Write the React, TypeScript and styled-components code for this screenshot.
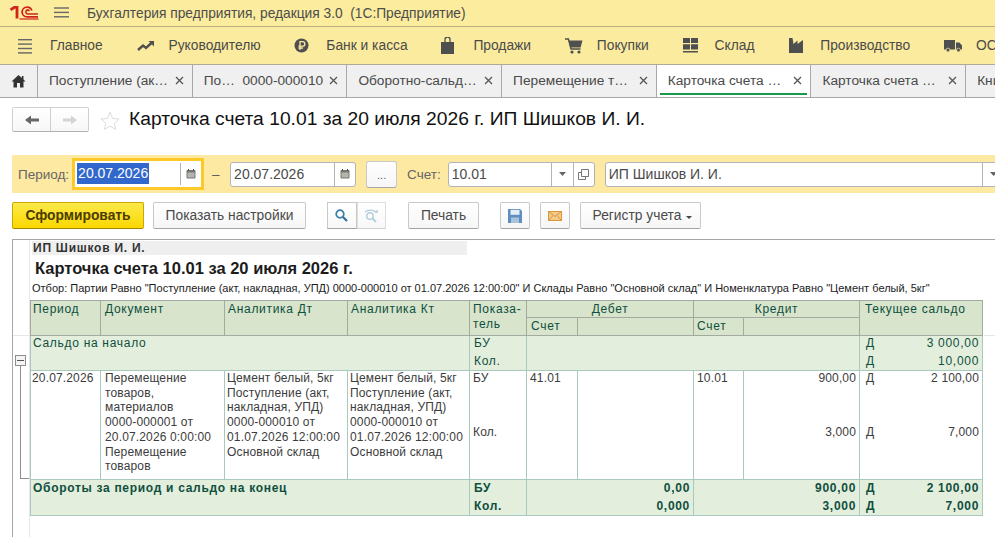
import React from "react";
import styled, { createGlobalStyle } from "styled-components";

const Global = createGlobalStyle`
  html, body { margin: 0; padding: 0; background: #fff; overflow: hidden; }
  body { font-family: "Liberation Sans", Arial, sans-serif; }
  * { box-sizing: border-box; }
`;

const Page = styled.div`
  width: 995px; height: 537px; overflow: hidden; display: flex; flex-direction: column;
`;
const TitleBar = styled.header`
  height: 27px; flex: none; background: #fbec9e; border-bottom: 1px solid #b9ae84;
  display: flex; align-items: center; padding-left: 10px; color: #4d4d4d; font-size: 13.75px;
`;
const TitleText = styled.span` margin-left: 18px; white-space: pre; `;
const LogoGap = styled.span` width: 15px; flex: none; `;
const MenuBar = styled.nav`
  height: 38px; flex: none; background: #fbeb9f; border-bottom: 1px solid #aeaa96;
  display: flex; align-items: center; padding-left: 18px; gap: 33.8px; white-space: nowrap; overflow: hidden;
`;
const MenuItem = styled.div`
  display: flex; align-items: center; gap: 0; font-size: 13.8px; color: #4a4a4a;
`;
const MenuIcon = styled.span`
  width: 32px; flex: none; display: flex; align-items: center;
  svg { display: block; }
`;
const TabBar = styled.div`
  height: 33px; flex: none; background: #f0f0f0; border-bottom: 1px solid #a8a8a8;
  display: flex; overflow: hidden;
`;
const HomeTab = styled.div`
  width: 38px; flex: none; border-right: 1px solid #a8a8a8; display: flex; align-items: center; justify-content: center;
`;
const Tab = styled.div<{ $active?: boolean }>`
  position: relative; width: 154.7px; flex: none; border-right: 1px solid #a8a8a8;
  background: ${p => (p.$active ? "#fff" : "transparent")};
  display: flex; align-items: center; padding: 0 8px 2px 11px; font-size: 13.7px; color: #4a4a4a; white-space: pre;
  ${p => p.$active && `&::after { content: ""; position: absolute; left: 3px; right: 3px; bottom: 2px; height: 2px; background: #169a4c; }`}
`;
const TabLabel = styled.span` flex: 1; overflow: hidden; `;
const NavRow = styled.div`
  height: 57px; flex: none; padding: 9px 0 0 12px; display: flex; align-items: flex-start;
`;
const NavGroup = styled.div`
  width: 77px; height: 25px; display: flex; border: 1px solid #cfcfcf; border-radius: 2px; border-bottom-color: #b0b0b0;
  background: linear-gradient(#fff, #f7f7f7);
`;
const NavButton = styled.div`
  flex: 1; display: flex; align-items: center; justify-content: center;
  & + & { border-left: 1px solid #cfcfcf; }
`;
const StarWrap = styled.span` margin: 4px 0 0 11px; width: 29px; `;
const PageTitle = styled.h1`
  margin: 0; font-weight: 400; font-size: 19.25px; color: #111; line-height: 24px; white-space: nowrap;
`;
const FilterBand = styled.div`
  height: 38px; flex: none; margin-left: 12px; background: #fde9a2; display: flex; align-items: center;
  padding-left: 6px; white-space: nowrap; font-size: 13.5px; color: #666; overflow: hidden;
`;
const FocusRing = styled.div`
  width: 132px; height: 32px; flex: none; border: 3px solid #fcc928; background: #fff; margin-left: 3px;
  display: flex; padding: 2px 0 2px 2px; align-items: stretch;
`;
const FieldBox = styled.div<{ $w: number; $ml: number }>`
  width: ${p => p.$w}px; margin-left: ${p => p.$ml}px; height: 25px; flex: none; background: #fff;
  border: 1px solid #b3b3b3; border-radius: 3px; display: flex; align-items: stretch;
  font-size: 14px; color: #4a4a4a; overflow: hidden;
`;
const FieldText = styled.span` flex: 1; padding-left: 3px; line-height: 23px; `;
const Selected = styled.span`
  flex: 1; font-size: 14px; line-height: 21px;
  & > span { background: #3268cc; color: #fff; display: inline-block; padding: 0 1px 0 1px; }
`;
const FieldBtn = styled.span<{ $w: number }>`
  width: ${p => p.$w}px; flex: none; border-left: 1px solid #b3b3b3; display: flex; align-items: center; justify-content: center;
`;
const Dash = styled.span` margin-left: 8px; flex: none; width: 8px; color: #555; `;
const FieldLabel = styled.span<{ $ml: number }>` margin-left: ${p => p.$ml}px; flex: none; `;
const DotsBtn = styled.div`
  width: 31px; height: 27px; flex: none; margin-left: 10px; background: linear-gradient(#fff, #f6f6f6); border: 1px solid #c9c9c9;
  border-bottom-color: #a8a8a8; border-radius: 3px; text-align: center; font-size: 11px; line-height: 27px; color: #666;
`;
const ActionBar = styled.div`
  height: 46px; flex: none; padding: 9px 0 0 12px; display: flex; align-items: flex-start;
`;
const Btn = styled.div<{ $w: number; $ml?: number; $primary?: boolean }>`
  width: ${p => p.$w}px; margin-left: ${p => p.$ml ?? 0}px; height: 27px; flex: none; border-radius: 2px;
  display: flex; align-items: center; justify-content: center; font-size: 13.8px; white-space: nowrap;
  color: ${p => (p.$primary ? "#4a3c00" : "#4a4a4a")}; font-weight: ${p => (p.$primary ? 700 : 400)};
  border: 1px solid ${p => (p.$primary ? "#c9a900" : "#c9c9c9")};
  border-bottom-color: ${p => (p.$primary ? "#a08800" : "#a3a3a3")};
  background: ${p => (p.$primary ? "linear-gradient(#fce94a, #fbd800)" : "linear-gradient(#fff, #f6f6f6)")};
`;
const DropBtn = styled(Btn)` padding-left: 4px; `;
const SearchGroup = styled.div`
  width: 59px; margin-left: 21px; height: 27px; flex: none; display: flex;
`;
const SearchBtn = styled.div<{ $off?: boolean }>`
  flex: 1; display: flex; align-items: center; justify-content: center; background: linear-gradient(#fff, #f8f8f8);
  border: 1px solid ${p => (p.$off ? "#dedede" : "#c9c9c9")};
  border-bottom-color: ${p => (p.$off ? "#d0d0d0" : "#a3a3a3")};
`;
const Caret = styled.span`
  width: 0; height: 0; border: 3px solid transparent; border-top: 3px solid #444; border-bottom: 0; margin: 3px 0 0 5px;
`;
const Report = styled.section`
  position: relative; flex: 1; margin-left: 12px; border-left: 1px solid #a6a6a6; border-top: 1px solid #a6a6a6;
  display: flex; min-height: 0;
  &::after { content: ""; position: absolute; left: 971px; right: 0; top: 95px; height: 1px; background: #e6e6e6; }
`;
const Gutter = styled.div`
  width: 17px; flex: none; border-right: 1px solid #e6e6e6; display: flex; flex-direction: column;
`;
const GutterHead = styled.div` height: 96px; flex: none; border-bottom: 1px solid #e6e6e6; `;
const GroupBox = styled.div`
  width: 11px; height: 11px; margin: 19px 0 0 2px; flex: none; border: 1px solid #8e8e8e; background: #f4f4f4;
  display: flex; align-items: center; justify-content: center;
  &::before { content: ""; width: 7px; height: 1px; background: #555; }
`;
const GroupLine = styled.div`
  width: 9px; height: 113px; margin-left: 7px; flex: none; border-left: 1px solid #8e8e8e; border-bottom: 1px solid #8e8e8e;
`;
const Sheet = styled.div` flex: 1; min-width: 0; `;
const OrgLine = styled.div`
  width: 435px; height: 14px; margin: 1px 0 0 2px; background: #efefef; font-size: 12px; font-weight: 700; line-height: 14px;
  color: #333; padding-left: 1px; letter-spacing: .75px;
`;
const SheetTitle = styled.div`
  margin: 3px 0 0 5px; height: 20px; font-size: 16.5px; font-weight: 700; color: #1c1c1c; line-height: 20px; white-space: nowrap;
`;
const FilterLine = styled.div`
  margin: 3px 0 0 2px; height: 19px; font-size: 11px; line-height: 14px; color: #1c1c1c; white-space: nowrap;
`;
const Table = styled.table`
  width: 952px; table-layout: fixed; border-collapse: collapse; font-size: 12px; line-height: 14.7px;
  letter-spacing: .15px; color: #3c3c3c;
`;
const Th = styled.th<{ $center?: boolean; $pl?: number }>`
  background: #d8e4cc; border: 1px solid #a3aaa0; padding: 1px 3px 0 ${p => p.$pl ?? 3}px; font-weight: 400; color: #0f4f40; vertical-align: top;
  text-align: ${p => (p.$center ? "center" : "left")}; overflow: hidden; white-space: nowrap; letter-spacing: .7px;
`;
const HeadRow = styled.tr<{ $h: number }>` height: ${p => p.$h}px; `;
const Row = styled.tr<{ $h: number }>` height: ${p => p.$h}px; `;
const Td = styled.td<{ $right?: boolean; $bold?: boolean; $band?: boolean; $flat?: "top" | "bottom"; $pl?: number }>`
  border: 1px solid #a9c9bf; padding: ${p => (p.$bold ? 1 : 0)}px 3px 0 ${p => p.$pl ?? 3}px; vertical-align: top; white-space: nowrap; overflow: hidden;
  line-height: 14.7px;
  text-align: ${p => (p.$right ? "right" : "left")};
  font-weight: ${p => (p.$bold ? 700 : 400)};
  ${p => p.$band && "background: #e3eedc; color: #0f4f40; letter-spacing: .7px;"}
  ${p => p.$flat === "top" && "border-bottom: 0;"}
  ${p => p.$flat === "bottom" && "border-top: 0;"}
`;
const Saldo = styled.div` display: flex; justify-content: space-between; padding-left: 3px; `;
const Lines = styled.div` white-space: pre-line; `;

const Ic = ({ w = 16, h = 16, children }: { w?: number; h?: number; children: React.ReactNode }) => (
  <svg width={w} height={h} viewBox={`0 0 ${w} ${h}`}>{children}</svg>
);
const Logo = () => (
  <svg width="29" height="14" viewBox="0 0 29 14" fill="none">
    <path d="M0.5 3.8 L5 1 H7 V12.5" stroke="#d0231c" strokeWidth="2.8" />
    <path d="M28 10.9 H17 A4.9 4.9 0 0 1 17 1.1 A4.9 4.9 0 0 1 21.8 4.5" stroke="#d0231c" strokeWidth="1.8" />
    <path d="M28 8 H17.5 A2.1 2.1 0 0 1 17.5 3.9 A2.1 2.1 0 0 1 19.3 5.2" stroke="#d0231c" strokeWidth="1.6" />
    <path d="M9.5 13 H28.5" stroke="#d0231c" strokeWidth="1.2" />
  </svg>
);
const c = "#4f4f4f";
const Burger = ({ n = 3 }: { n?: number }) => (
  <Ic w={15} h={16}>
    {Array.from({ length: n }, (_, i) => (
      <rect key={i} x="0" y={n === 3 ? 2.3 + i * 4.4 : 1 + i * 4.4} width={n === 3 ? 15 : 14} height="1.4" fill="#666" />
    ))}
  </Ic>
);
const Chart = () => (
  <Ic w={18} h={12}>
    <path d="M1 10 L6 5.5 L9 8 L15 2.5" stroke={c} strokeWidth="2.4" fill="none" />
    <path d="M11.5 1 H17 V6.5 Z" fill={c} />
  </Ic>
);
const Coin = () => (
  <Ic w={15} h={15}>
    <circle cx="7.5" cy="7.5" r="7" fill={c} />
    <path d="M6 12 V3.7 H8.6 A2.2 2.2 0 0 1 8.6 8.2 H4.5 M4.5 10 H9" stroke="#fbe9a0" strokeWidth="1.3" fill="none" />
  </Ic>
);
const Bag = () => (
  <Ic w={13} h={17}>
    <path d="M0 5 H13 V17 H0 Z" fill={c} />
    <path d="M4 7 V2.5 A2.5 2.5 0 0 1 9 2.5 V7" stroke={c} strokeWidth="1.3" fill="none" />
  </Ic>
);
const Cart = () => (
  <Ic w={18} h={16}>
    <path d="M0 1 H3.4 L6 11 H15.5" stroke={c} strokeWidth="1.4" fill="none" />
    <path d="M3.6 2.4 H17.5 L15.6 9.5 H5.3 Z" fill={c} />
    <circle cx="7" cy="14" r="1.6" fill={c} /><circle cx="14" cy="14" r="1.6" fill={c} />
  </Ic>
);
const Store = () => (
  <Ic w={15} h={15}>
    <path d="M0 0 H7 V5 H0Z M8 0 H15 V5 H8Z M0 6.3 H7 V11.5 H0Z M8 6.3 H15 V11.5 H8Z M0 13 H15 V14.6 H0Z" fill={c} />
  </Ic>
);
const Factory = () => (
  <Ic w={15} h={15}>
    <path d="M1 15 V0 H4.5 L5.5 6 L9.5 2.5 V6 L15 2 V15 Z" fill={c} />
  </Ic>
);
const Truck = () => (
  <Ic w={18} h={13}>
    <path d="M0 1 H11 V10.5 H0Z M12 3.5 H15.5 L18 6.5 V10.5 H12Z" fill={c} />
    <circle cx="4" cy="11" r="1.9" fill={c} stroke="#fbe9a0" strokeWidth=".7" />
    <circle cx="14.5" cy="11" r="1.9" fill={c} stroke="#fbe9a0" strokeWidth=".7" />
  </Ic>
);
const Home = () => (
  <Ic w={15} h={14}>
    <path d="M7.5 1 L0.5 7.5 H2.5 V13.5 H6 V9 H9 V13.5 H12.5 V7.5 H14.5 L12.5 5.6 V2 H10.8 V4 Z" fill="#333" />
  </Ic>
);
const Close = () => (
  <Ic w={9} h={9}>
    <path d="M1 1 L8 8 M8 1 L1 8" stroke="#555" strokeWidth="1.3" />
  </Ic>
);
const Arrow = ({ dir, color }: { dir: "l" | "r"; color: string }) => (
  <Ic w={14} h={10}>
    <path d={dir === "l" ? "M0 5 L6 0.5 V3.5 H14 V6.5 H6 V9.5 Z" : "M14 5 L8 0.5 V3.5 H0 V6.5 H8 V9.5 Z"} fill={color} />
  </Ic>
);
const Star = () => (
  <Ic w={20} h={19}>
    <path d="M10 1.2 L12.6 7.4 L19 8 L14.2 12.3 L15.7 18.4 L10 15.2 L4.3 18.4 L5.8 12.3 L1 8 L7.4 7.4 Z" fill="none" stroke="#dcdcdc" />
  </Ic>
);
const Calendar = () => (
  <Ic w={10} h={10}>
    <rect x="0.5" y="1" width="9" height="8.5" rx="1" fill="#77766f" />
    <rect x="1.5" y="3.5" width="7" height="5" fill="#b5b4ad" />
    <path d="M2.5 0 V2 M7.5 0 V2" stroke="#555" />
  </Ic>
);
const Drop = () => (
  <svg width="7" height="4" viewBox="0 0 7 4"><path d="M0 0 H7 L3.5 4 Z" fill="#666" /></svg>
);
const Copy = () => (
  <Ic w={11} h={11}>
    <path d="M3.5 .5 H10.5 V7.5 H3.5 Z M3.5 3.5 H.5 V10.5 H7.5 V7.5" fill="none" stroke="#777" />
  </Ic>
);
const Search = ({ off }: { off?: boolean }) => off ? (
  <Ic w={16} h={15}>
    <circle cx="7" cy="8" r="3.3" fill="none" stroke="#b4d0dc" strokeWidth="1.5" />
    <path d="M9.5 10.5 L13 14" stroke="#b4d0dc" strokeWidth="2" />
    <path d="M2 4 A7 5 0 0 1 13 4" fill="none" stroke="#b4d0dc" strokeWidth="1.3" />
    <path d="M11 4.5 L15 5 L14.5 1.5 Z" fill="#b4d0dc" />
  </Ic>
) : (
  <Ic w={13} h={13}>
    <circle cx="5" cy="5" r="3.8" fill="none" stroke="#3b7fa8" strokeWidth="1.7" />
    <path d="M8 8 L12 12" stroke="#2f6e96" strokeWidth="2.2" />
  </Ic>
);
const Disk = () => (
  <Ic w={14} h={14}>
    <path d="M0 0 H12 L14 2 V14 H0 Z" fill="#5e8dc0" />
    <rect x="2.5" y="0.8" width="9" height="5" fill="#e4edf5" />
    <rect x="3" y="8.5" width="8" height="5.5" fill="#a9c3dc" />
  </Ic>
);
const Mail = () => (
  <Ic w={14} h={10}>
    <rect x="0.5" y="0.5" width="13" height="9" fill="#f5c98a" stroke="#d9963a" />
    <path d="M.5 .5 L7 5.5 L13.5 .5 M.5 9.5 L5 4.5 M13.5 9.5 L9 4.5" stroke="#d9963a" fill="none" />
  </Ic>
);

const menu: [React.ReactNode, string][] = [
  [<Burger n={4} />, "Главное"],
  [<Chart />, "Руководителю"],
  [<Coin />, "Банк и касса"],
  [<Bag />, "Продажи"],
  [<Cart />, "Покупки"],
  [<Store />, "Склад"],
  [<Factory />, "Производство"],
  [<Truck />, "ОС"],
];
const tabs = ["Поступление (ак…", "По…  0000-000010", "Оборотно-сальд…", "Перемещение т…", "Карточка счета …", "Карточка счета …", "Книга"];
const analytics = "Цемент белый, 5кг\nПоступление (акт,\nнакладная, УПД)\n0000-000010 от\n01.07.2026 12:00:00\nОсновной склад";

const Sal = ({ v }: { v: string }) => <Saldo><span>Д</span><span>{v}</span></Saldo>;

export default function App() {
  return (
    <Page>
      <Global />
      <TitleBar>
        <Logo />
        <LogoGap />
        <Burger />
        <TitleText>Бухгалтерия предприятия, редакция 3.0  (1С:Предприятие)</TitleText>
      </TitleBar>
      <MenuBar>
        {menu.map(([icon, label]) => (
          <MenuItem key={label}><MenuIcon>{icon}</MenuIcon>{label}</MenuItem>
        ))}
      </MenuBar>
      <TabBar>
        <HomeTab><Home /></HomeTab>
        {tabs.map((t, i) => (
          <Tab key={i} $active={i === 4}>
            <TabLabel>{t}</TabLabel>
            {i < 6 && <Close />}
          </Tab>
        ))}
      </TabBar>
      <NavRow>
        <NavGroup>
          <NavButton><Arrow dir="l" color="#666" /></NavButton>
          <NavButton><Arrow dir="r" color="#d4d4d4" /></NavButton>
        </NavGroup>
        <StarWrap><Star /></StarWrap>
        <PageTitle>Карточка счета 10.01 за 20 июля 2026 г. ИП Шишков И. И.</PageTitle>
      </NavRow>
      <FilterBand>
        Период:
        <FocusRing>
          <Selected><span>20.07.2026</span></Selected>
          <FieldBtn $w={21}><Calendar /></FieldBtn>
        </FocusRing>
        <Dash>–</Dash>
        <FieldBox $w={126} $ml={10}>
          <FieldText>20.07.2026</FieldText>
          <FieldBtn $w={21}><Calendar /></FieldBtn>
        </FieldBox>
        <DotsBtn>...</DotsBtn>
        <FieldLabel $ml={10}>Счет:</FieldLabel>
        <FieldBox $w={147} $ml={7}>
          <FieldText>10.01</FieldText>
          <FieldBtn $w={22}><Drop /></FieldBtn>
          <FieldBtn $w={21}><Copy /></FieldBtn>
        </FieldBox>
        <FieldBox $w={400} $ml={10}>
          <FieldText>ИП Шишков И. И.</FieldText>
          <FieldBtn $w={22}><Drop /></FieldBtn>
        </FieldBox>
      </FilterBand>
      <ActionBar>
        <Btn $w={132} $primary>Сформировать</Btn>
        <Btn $w={153} $ml={9}>Показать настройки</Btn>
        <SearchGroup>
          <SearchBtn><Search /></SearchBtn>
          <SearchBtn $off><Search off /></SearchBtn>
        </SearchGroup>
        <Btn $w={71} $ml={22}>Печать</Btn>
        <Btn $w={30} $ml={21}><Disk /></Btn>
        <Btn $w={30} $ml={10}><Mail /></Btn>
        <DropBtn $w={121} $ml={10}>Регистр учета<Caret /></DropBtn>
      </ActionBar>
      <Report>
        <Gutter>
          <GutterHead />
          <GroupBox />
          <GroupLine />
        </Gutter>
        <Sheet>
          <OrgLine>ИП Шишков И. И.</OrgLine>
          <SheetTitle>Карточка счета 10.01 за 20 июля 2026 г.</SheetTitle>
          <FilterLine>Отбор: Партии Равно "Поступление (акт, накладная, УПД) 0000-000010 от 01.07.2026 12:00:00" И Склады Равно "Основной склад" И Номенклатура Равно "Цемент белый, 5кг"</FilterLine>
          <Table>
            <colgroup>
              {[70, 124, 123, 122, 57, 51, 116, 50, 116, 123].map((w, i) => <col key={i} width={w} />)}
            </colgroup>
            <thead>
              <HeadRow $h={17}>
                <Th rowSpan={2} $pl={2}>Период</Th>
                <Th rowSpan={2} $pl={4}>Документ</Th>
                <Th rowSpan={2}>Аналитика Дт</Th>
                <Th rowSpan={2}>Аналитика Кт</Th>
                <Th rowSpan={2}>Показа-<br />тель</Th>
                <Th colSpan={2} $center>Дебет</Th>
                <Th colSpan={2} $center>Кредит</Th>
                <Th rowSpan={2} $pl={5}>Текущее сальдо</Th>
              </HeadRow>
              <HeadRow $h={18}>
                <Th $pl={4}>Счет</Th><Th />
                <Th>Счет</Th><Th />
              </HeadRow>
            </thead>
            <tbody>
              <Row $h={18}>
                <Td colSpan={4} rowSpan={2} $band $pl={2}>Сальдо на начало</Td>
                <Td $band $flat="top" $pl={4}>БУ</Td>
                <Td colSpan={4} rowSpan={2} $band />
                <Td $band $flat="top"><Sal v="3 000,00" /></Td>
              </Row>
              <Row $h={17}>
                <Td $band $flat="bottom" $pl={4}>Кол.</Td>
                <Td $band $flat="bottom"><Sal v="10,000" /></Td>
              </Row>
              <Row $h={54}>
                <Td rowSpan={2} $pl={1}>20.07.2026</Td>
                <Td rowSpan={2} $pl={4}><Lines>{"Перемещение\nтоваров,\nматериалов\n0000-000001 от\n20.07.2026 0:00:00\nПеремещение\nтоваров"}</Lines></Td>
                <Td rowSpan={2} $pl={2}><Lines>{analytics}</Lines></Td>
                <Td rowSpan={2} $pl={2}><Lines>{analytics}</Lines></Td>
                <Td $flat="top">БУ</Td>
                <Td $flat="top">41.01</Td>
                <Td $flat="top" />
                <Td $flat="top">10.01</Td>
                <Td $flat="top" $right>900,00</Td>
                <Td $flat="top"><Sal v="2 100,00" /></Td>
              </Row>
              <Row $h={55}>
                <Td $flat="bottom">Кол.</Td>
                <Td $flat="bottom" />
                <Td $flat="bottom" />
                <Td $flat="bottom" />
                <Td $flat="bottom" $right>3,000</Td>
                <Td $flat="bottom"><Sal v="7,000" /></Td>
              </Row>
              <Row $h={18}>
                <Td colSpan={4} rowSpan={2} $band $bold $pl={2}>Обороты за период и сальдо на конец</Td>
                <Td $band $bold $flat="top" $pl={4}>БУ</Td>
                <Td colSpan={2} $band $bold $right $flat="top">0,00</Td>
                <Td colSpan={2} $band $bold $right $flat="top">900,00</Td>
                <Td $band $bold $flat="top"><Sal v="2 100,00" /></Td>
              </Row>
              <Row $h={18}>
                <Td $band $bold $flat="bottom" $pl={4}>Кол.</Td>
                <Td colSpan={2} $band $bold $right $flat="bottom">0,000</Td>
                <Td colSpan={2} $band $bold $right $flat="bottom">3,000</Td>
                <Td $band $bold $flat="bottom"><Sal v="7,000" /></Td>
              </Row>
            </tbody>
          </Table>
        </Sheet>
      </Report>
    </Page>
  );
}
